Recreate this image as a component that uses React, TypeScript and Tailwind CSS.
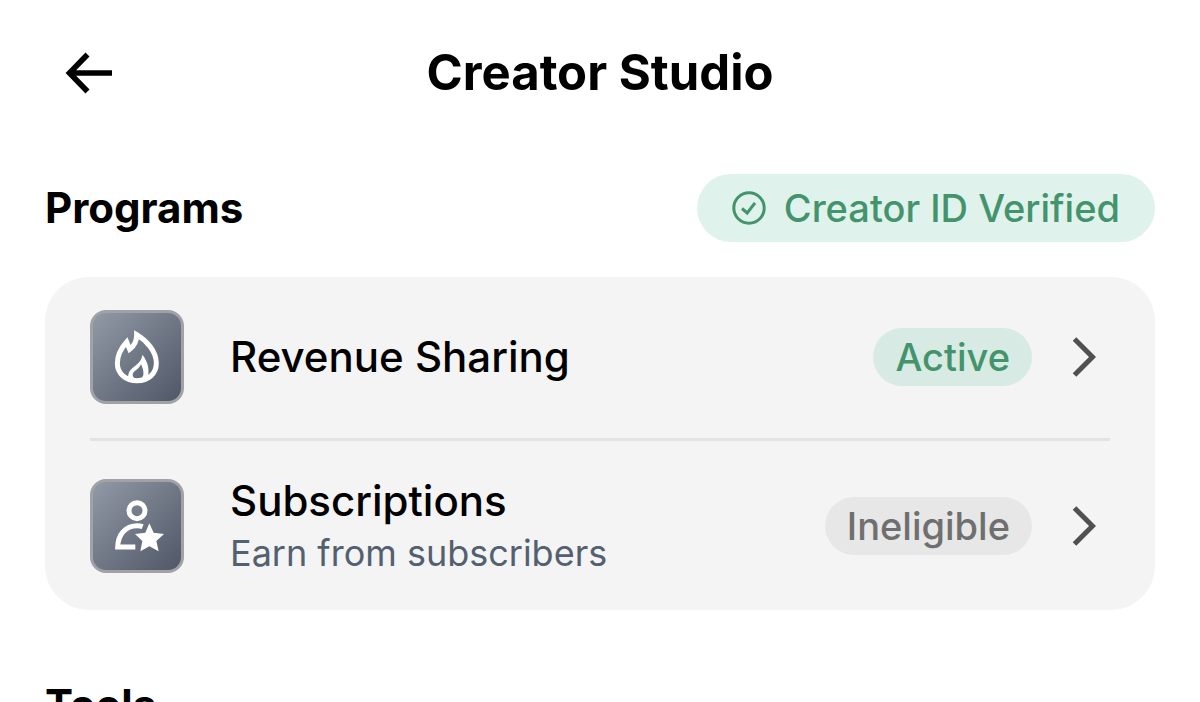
import type { ReactNode } from "react";

function Tile({ children }: { children: ReactNode }) {
  return (
    <span className="flex size-[94px] shrink-0 overflow-hidden rounded-2xl border-3 border-[#a0a2a5] bg-linear-to-br from-[#929aa6] to-[#505868] text-white">
      {children}
    </span>
  );
}

function FlameIcon() {
  return (
    <svg viewBox="39 39 264 264" className="size-full" fill="none" stroke="currentColor" strokeWidth="15" strokeMiterlimit="6" aria-hidden="true">
      <path d="M140 126 L149 148 C162 138 170 124 170 104 C198 121 229 152 229 190 C229 222 204 242 171 242 C138 242 112 222 112 190 C112 166 123 145 140 126 Z" />
      <path
        d="M145 238 C140 196 182 203 187 164 C205 186 212 216 199 239 Z M183 192 C179 208 157 212 158 226 C159 240 187 241 190 225 C192 213 187 201 183 192 Z"
        fill="currentColor"
        fillRule="evenodd"
        stroke="none"
      />
    </svg>
  );
}

function SubscriberIcon() {
  return (
    <svg viewBox="39 36 264 264" className="size-full" fill="none" stroke="currentColor" strokeWidth="15" aria-hidden="true">
      <circle cx="171" cy="122" r="24" />
      <path d="M166 231 H113 C114 195 135 167 172 167 Q180 167 188 170" />
      <path
        d="M208 160 L221 188 L252 192 L229 213 L236 244 L208 229 L181 244 L187 213 L165 192 L196 188 Z"
        fill="currentColor"
        stroke="none"
      />
    </svg>
  );
}

function Chevron() {
  return (
    <svg viewBox="0 0 24 42" className="mr-3.5 h-[42px] w-6 shrink-0 text-[#505052]" fill="none" stroke="currentColor" strokeWidth="5" aria-hidden="true">
      <path d="M2.5 3 L20.5 21 L2.5 39" />
    </svg>
  );
}

type ProgramProps = {
  icon: ReactNode;
  title: string;
  subtitle?: string;
  status: string;
  statusClass: string;
};

function Program({ icon, title, subtitle, status, statusClass }: ProgramProps) {
  return (
    <button type="button" className="flex w-full items-center text-left">
      <Tile>{icon}</Tile>
      <span className="ml-[46px] flex min-w-0 flex-1 flex-col">
        <span className="text-[42px] leading-[54px] font-medium text-black">{title}</span>
        {subtitle && <span className="text-4xl leading-[50px] text-[#536070]">{subtitle}</span>}
      </span>
      <span className={`mr-10 rounded-full px-[22px] text-[38px] leading-[58px] font-medium ${statusClass}`}>{status}</span>
      <Chevron />
    </button>
  );
}

export default function App() {
  return (
    <div className="h-screen overflow-hidden bg-white px-[45px] font-['Inter',sans-serif] text-black">
      <header className="grid h-[146px] grid-cols-[1fr_auto_1fr] items-center">
        <button type="button" aria-label="Back" className="ml-5 w-12">
          <svg viewBox="0 0 48 42" className="h-[42px] w-12" fill="none" stroke="currentColor" strokeWidth="5.6" aria-hidden="true">
            <path d="M22.5 2.5 L4.5 21 L22.5 39.5 M4.5 21 H47" />
          </svg>
        </button>
        <h1 className="text-[49px] leading-[56px] font-bold">Creator Studio</h1>
      </header>

      <main>
        <div className="mt-7 flex items-center justify-between">
          <h2 className="text-[42px] leading-[52px] font-bold">Programs</h2>
          <span className="flex h-[68px] items-center gap-[18px] rounded-full bg-[#dff2eb] px-[35px] text-[38px] font-medium text-[#43946c]">
            <svg viewBox="0 0 34 34" className="size-[34px]" fill="none" stroke="currentColor" strokeWidth="3" aria-hidden="true">
              <circle cx="17" cy="17" r="15.2" />
              <path d="M10 17.5 L15.2 22 L23 11.8" />
            </svg>
            Creator ID Verified
          </span>
        </div>

        <section className="mt-[35px] rounded-[44px] bg-[#f4f4f4] px-[45px]">
          <div className="border-b-3 border-[#e3e3e4] pt-[33px] pb-[34px]">
            <Program
              icon={<FlameIcon />}
              title="Revenue Sharing"
              status="Active"
              statusClass="bg-[#d7eae3] text-[#43946c]"
            />
          </div>
          <div className="pt-[33px] pb-[32px]">
            <Program
              icon={<SubscriberIcon />}
              title="Subscriptions"
              subtitle="Earn from subscribers"
              status="Ineligible"
              statusClass="bg-[#e7e7e7] text-[#6f6f70]"
            />
          </div>
        </section>

        <h2 className="mt-[69px] text-[42px] leading-[52px] font-bold">Tools</h2>
      </main>
    </div>
  );
}
